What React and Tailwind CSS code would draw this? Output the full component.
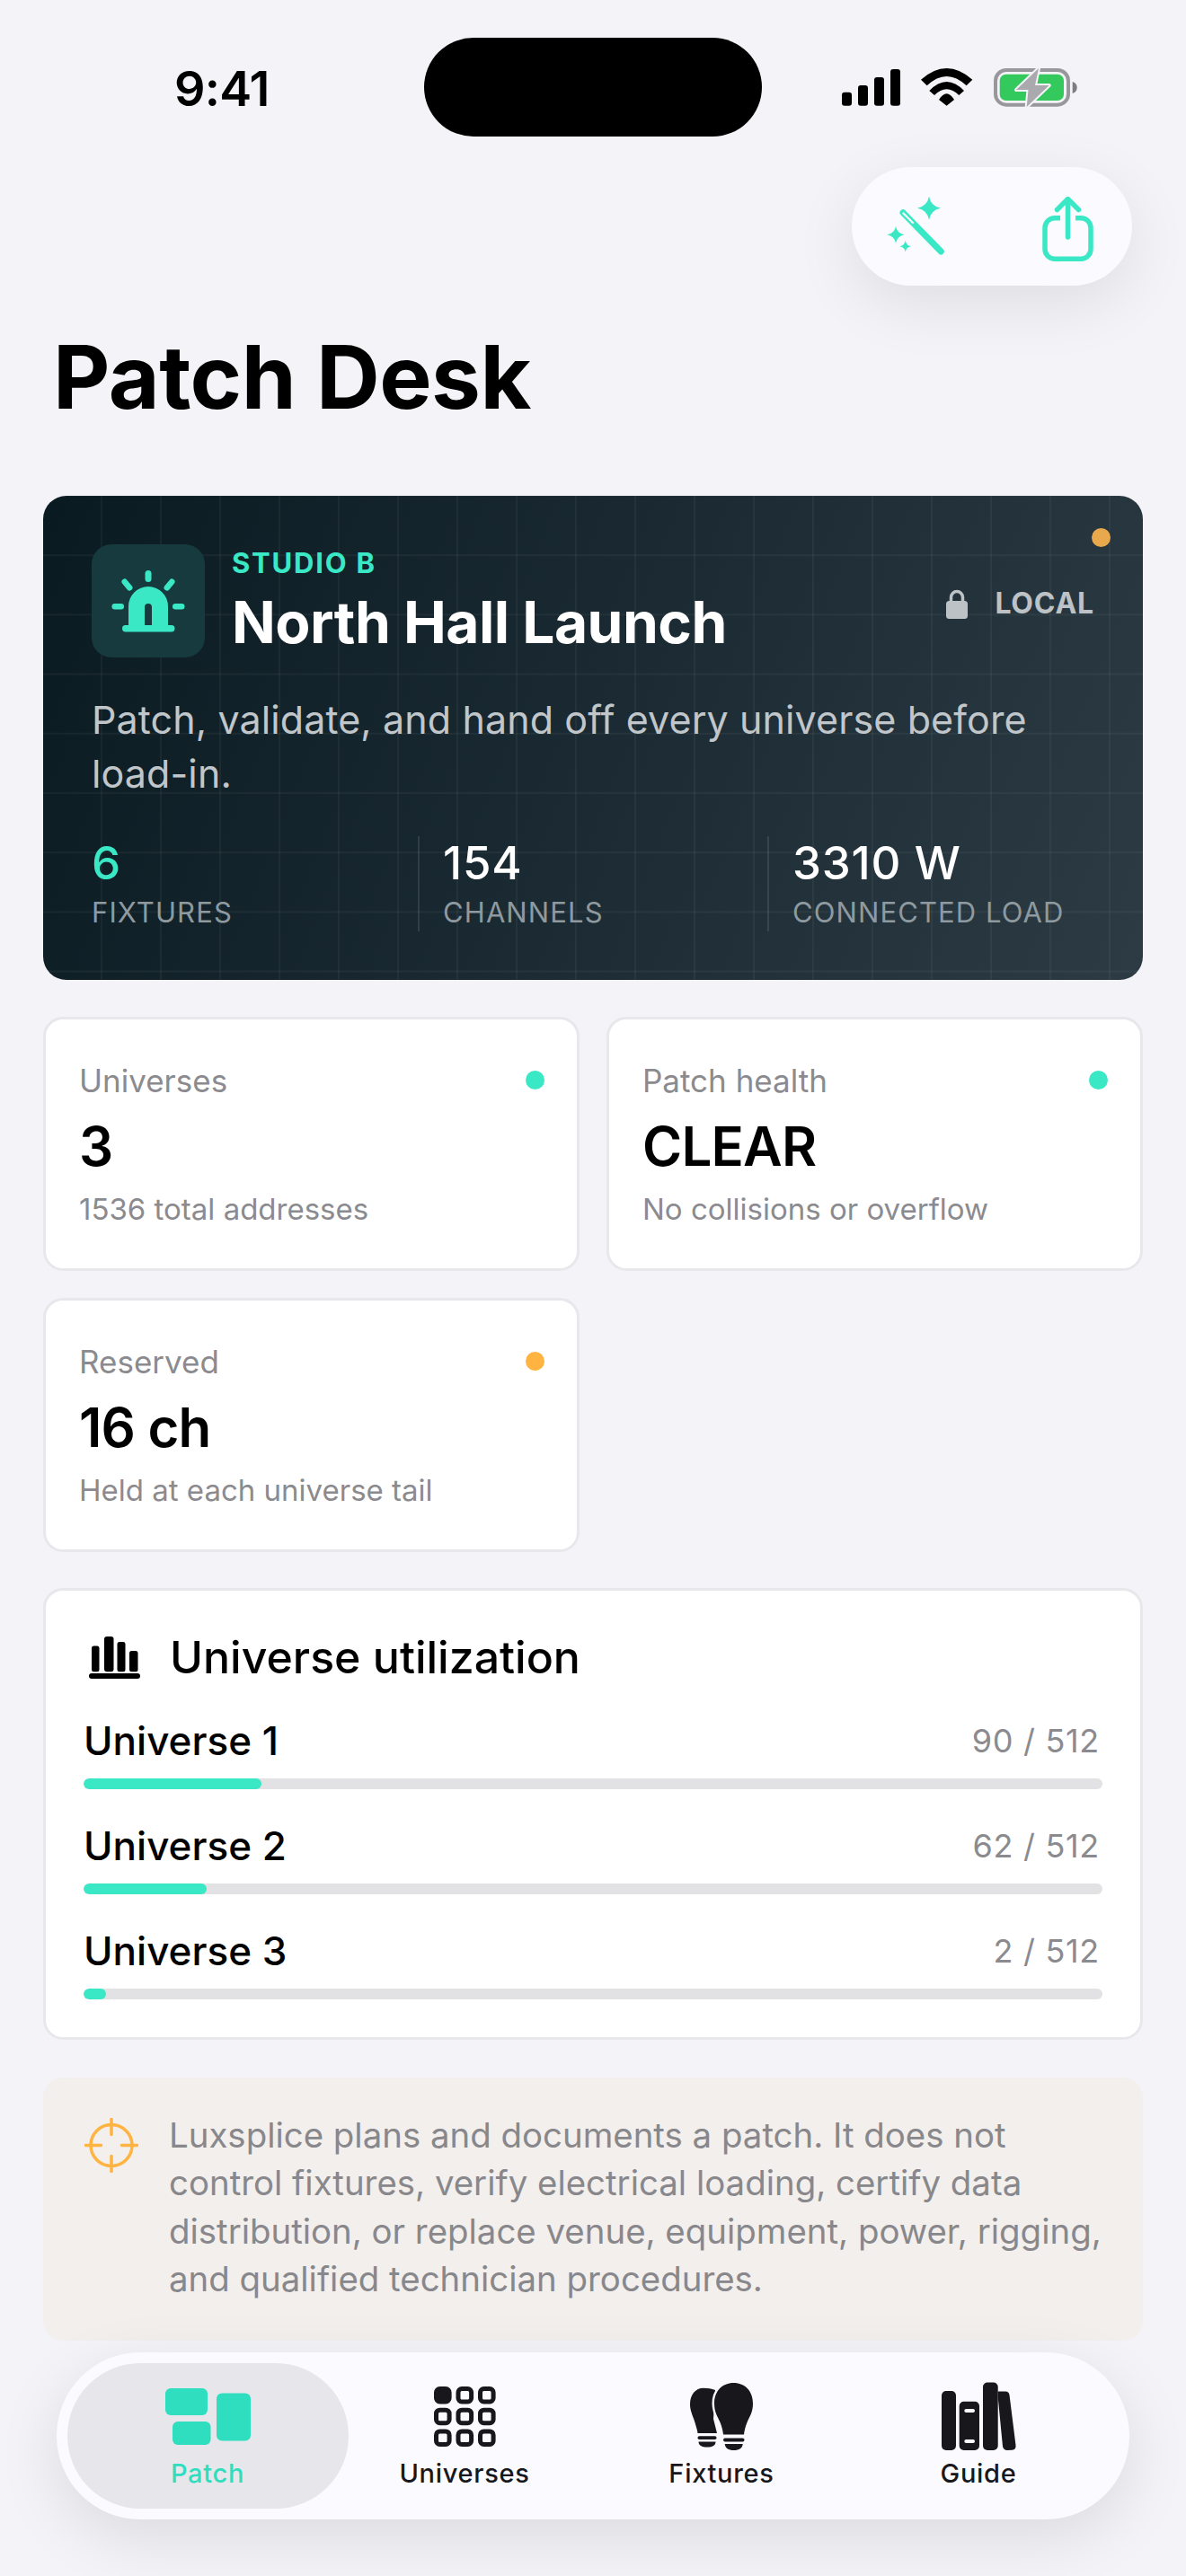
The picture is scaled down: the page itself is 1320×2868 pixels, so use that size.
const mint = '#3ae8c6';
const tabInk = '#18181c';
const navBg = '#fbfbff';

const SignalIcon = () => (
    <svg width="65" height="41" viewBox="0 0 65 41" fill="#000">
        <rect x="0" y="25.700" width="11" height="15" rx="3" />
        <rect x="18" y="18" width="11" height="22.700" rx="3" />
        <rect x="36" y="9" width="11" height="31.700" rx="3" />
        <rect x="54" y="0" width="11" height="40.700" rx="3" />
    </svg>
);

const WifiIcon = () => (
    <svg width="58" height="42" viewBox="0 0 58 42" fill="#000">
        <path d="M0 12.700Q28.600 -12.700 57.300 12.700L50.600 19.300Q28.600 -1.300 6.700 19.300Z" />
        <path d="M9.300 25Q28.600 5 48 25L42.300 30Q28.600 16.600 15 30Z" />
        <path d="M20 35Q28.600 21.600 37 35L28.600 41.700Z" />
    </svg>
);

const BatteryIcon = () => (
    <svg width="93" height="45" viewBox="0 0 93 45">
        <rect x="2" y="3" width="81" height="38.700" rx="12" fill="none" stroke="#98989c" strokeWidth="4" />
        <rect x="6.700" y="7.700" width="71.300" height="29.300" rx="7" fill="#34c95c" />
        <path d="M87.700 16c3.500 1 5 3.500 5 6.500s-1.500 5.500-5 6.500z" fill="#7d7d80" />
        <path d="M50 1L25 25h13.500L36.700 44 61.700 20H46z" fill="#aaaaae" stroke="#f3f3f8" strokeWidth="4" paintOrder="stroke" strokeLinejoin="round" />
    </svg>
);

const Sparkle = ({ x, y, r }) => {
    const k = r * 0.16;
    return <path d={`M${x} ${y - r}Q${x + k} ${y - k} ${x + r} ${y}Q${x + k} ${y + k} ${x} ${y + r}Q${x - k} ${y + k} ${x - r} ${y}Q${x - k} ${y - k} ${x} ${y - r}Z`} />;
};

const WandIcon = () => (
    <svg width="68" height="68" viewBox="0 0 68 68" fill={mint}>
        <Sparkle x={49} y={13.700} r={13} />
        <Sparkle x={12} y={43.300} r={9.500} />
        <Sparkle x={22.700} y={56.300} r={6.200} />
        <path d="M20 18.700L62.300 62" stroke={mint} strokeWidth="7" strokeLinecap="round" />
        <path d="M20.500 19.500L31 30" stroke={navBg} strokeWidth="2.200" strokeLinecap="round" />
    </svg>
);

const ShareIcon = () => (
    <svg width="57" height="72" viewBox="0 0 57 72" fill="none" stroke={mint} strokeWidth="5.500" strokeLinecap="round" strokeLinejoin="round">
        <path d="M28.500 45V3M16.500 14.500L28.500 2.500l12 12" />
        <path d="M20 23.700H14a11 11 0 0 0-11 11V58.300a11 11 0 0 0 11 11H43a11 11 0 0 0 11-11V34.700a11 11 0 0 0-11-11H37" strokeLinecap="butt" />
    </svg>
);

const BeaconIcon = () => (
    <svg width="82" height="69" viewBox="0 0 82 69" fill={mint}>
        <rect x="37.500" y="0" width="7" height="13" rx="3.500" />
        <rect x="14.200" y="8.500" width="6.500" height="15" rx="3.200" transform="rotate(-40 17.500 16)" />
        <rect x="61.300" y="8.500" width="6.500" height="15" rx="3.200" transform="rotate(40 64.500 16)" />
        <rect x="0.500" y="37" width="13.500" height="6.500" rx="3.200" />
        <rect x="68" y="37" width="13.500" height="6.500" rx="3.200" />
        <rect x="12" y="61" width="58.500" height="7.500" rx="3.700" />
        <path fillRule="evenodd" d="M19 62V40a22 22 0 0 1 44 0v22zM37 62h8V41a4 4 0 0 0-8 0z" />
    </svg>
);

const LockIcon = () => (
    <svg width="24" height="33" viewBox="0 0 24 33" fill="#bcc2c5">
        <path d="M5.500 15V9a6.500 6.500 0 0 1 13 0v6" fill="none" stroke="#bcc2c5" strokeWidth="3.500" />
        <rect x="0" y="13" width="24" height="20" rx="3.500" />
    </svg>
);

const ChartIcon = () => (
    <svg width="57" height="47" viewBox="0 0 57 47" fill="#000">
        <rect x="3" y="10.500" width="8.500" height="28.800" rx="2.500" />
        <rect x="17" y="0" width="10.500" height="39.300" rx="3" />
        <rect x="31.500" y="6" width="9" height="33.300" rx="2.500" />
        <rect x="45" y="16" width="9.500" height="23.300" rx="2.500" />
        <rect x="0" y="41" width="57" height="6" rx="3" />
    </svg>
);

const TargetIcon = () => (
    <svg width="60" height="61" viewBox="0 0 60 61" fill="none" stroke="#ffb340" strokeWidth="3.500" strokeLinecap="round">
        <circle cx="30" cy="30.500" r="23" />
        <path d="M30 1.500v17M30 42.500v17M1.500 30.500h17M41.500 30.500h17" />
    </svg>
);

const PatchIcon = () => (
    <svg width="95" height="63" viewBox="0 0 95 63" fill="#2fddbf">
        <rect x="0" y="0" width="47" height="30" rx="6" />
        <rect x="57" y="5.500" width="38" height="53" rx="6" />
        <rect x="8" y="37" width="42.500" height="26" rx="6" />
    </svg>
);

const GridIcon = () => {
    const cells = [];
    for (let r = 0; r < 3; r++) {
        for (let c = 0; c < 3; c++) {
            const first = r === 0 && c === 0;
            cells.push(
                <rect
                    key={`${r}-${c}`}
                    x={2.500 + c * 24.500}
                    y={2.500 + r * 23.700}
                    width="14.600"
                    height="14.500"
                    rx="4"
                    fill={first ? tabInk : 'none'}
                    stroke={tabInk}
                    strokeWidth="5"
                />
            );
        }
    }
    return (
        <svg width="69" height="67" viewBox="0 0 69 67">
            {cells}
        </svg>
    );
};

const BulbsIcon = () => (
    <svg width="70" height="75" viewBox="0 0 70 75" fill={tabInk}>
        <path d="M15 5.700C6 5.700 0 13 0 24c0 8 4 14 6 22 1.200 4 2.300 7.500 2.500 10H30L26 40 28 8C24 6.500 20 5.700 15 5.700z" />
        <rect x="8.500" y="59.300" width="21" height="3.700" rx="1.800" />
        <path d="M9.500 65.500h19c0 4-3.500 6-9.500 6s-9.500-2-9.500-6z" />
        <path d="M48.500 0C36 0 27 9 27 23c0 10 4 15 6.500 21 2 5 3 9 3.500 13.500H60c.5-4.500 1.500-8.500 3.500-13.500C66 38 70 33 70 23 70 9 61 0 48.500 0z" stroke={navBg} strokeWidth="5" paintOrder="stroke" />
        <rect x="37" y="61.500" width="23.500" height="4" rx="2" />
        <path d="M38.700 68h20c-.3 4.500-4 7-10 7s-9.700-2.500-10-7z" />
    </svg>
);

const BooksIcon = () => (
    <svg width="83" height="76" viewBox="0 0 83 76" fill={tabInk}>
        <rect x="0" y="10" width="16" height="66" rx="5" />
        <path fillRule="evenodd" d="M19.700 26.700a5 5 0 0 1 5-5H37a5 5 0 0 1 5 5V71a5 5 0 0 1-5 5H24.700a5 5 0 0 1-5-5zM27.300 30a2 2 0 0 0 0 4h7.700a2 2 0 0 0 0-4zM27.300 64a2 2 0 0 0 0 4h7.700a2 2 0 0 0 0-4z" />
        <rect x="46" y="0.500" width="16.700" height="75.500" rx="5" />
        <path d="M62.700 17V10.600h8.300c2.500 0 4.200 1.400 4.500 4L82.500 70.500c.4 3-1 5-4 5.300l-5.500.2c-2.800 0-4.500-1.500-5-4.200z" />
    </svg>
);

const StatCard = ({ label, value, note, dot }) => (
    <div className="relative h-[283px] rounded-[22px] border-[3px] border-[#e7e7ec] bg-white pl-[37px] pt-[48px]">
        <div className="text-[35px] leading-[40px] text-[#8b8b8f]">{label}</div>
        <div className="mt-[17px] text-[60px] leading-[72px] font-semibold tracking-[-0.8px] text-black">{value}</div>
        <div className="mt-[14px] text-[33px] leading-[40px] text-[#8b8b8f]">{note}</div>
        <span className={`absolute right-[36px] top-[57px] h-[21px] w-[21px] rounded-full ${dot}`} />
    </div>
);

const HeroStat = ({ value, label, accent, className }) => (
    <div className={className}>
        <div className={`text-[51px] leading-[60px] font-medium tracking-[0.8px] ${accent ? 'text-[#3ae8c6]' : 'text-white'}`}>{value}</div>
        <div className="mt-[6px] text-[31px] leading-[38px] tracking-[1.1px] text-[#8e9a9f]">{label}</div>
    </div>
);

const UniverseRow = ({ name, used, pct }) => (
    <div>
        <div className="flex h-[60px] items-center justify-between">
            <span className="text-[44px] font-medium text-black">{name}</span>
            <span className="pr-[3px] text-[36px] tracking-[0.7px] text-[#8b8b8f]">{used} / 512</span>
        </div>
        <div className="mt-[12px] h-[12px] overflow-hidden rounded-[6px] bg-[#e2e2e4]">
            <div className="h-full rounded-[6px] bg-[#3ae8c6]" style={{ width: `${pct}%` }} />
        </div>
    </div>
);

const TabItem = ({ icon, label, active }) => (
    <div className={`flex h-[162px] flex-col items-center pt-[21px] ${active ? '-mx-[13.5px] w-[313px] rounded-[81px] bg-[#e7e7eb]' : 'w-[286px]'}`}>
        <div className="flex h-[76px] items-center">{icon}</div>
        <div className={`mt-[8px] text-[29px] leading-[36px] font-medium tracking-[0.7px] ${active ? 'text-[#2fddbf]' : 'text-[#18181c]'}`}>{label}</div>
    </div>
);

export default function App() {
    const heroBg = {
        backgroundImage:
            'linear-gradient(rgba(255,255,255,0.045) 2px, transparent 2px), linear-gradient(90deg, rgba(255,255,255,0.045) 2px, transparent 2px), linear-gradient(112deg, #0a1a21 0%, #2c3b44 100%)',
        backgroundSize: '66px 66.200px, 66px 66.200px, 100% 100%',
        backgroundPosition: '0 -1px, -2px 0, 0 0',
    };

    return (
        <div className="relative h-[2868px] w-[1320px] overflow-hidden bg-[#f3f3f8] font-['Inter','Liberation_Sans',sans-serif]">
            {/* Status bar */}
            <div className="flex h-[110px] translate-y-[42px] items-center pl-[194px]">
                <div className="mt-[3px] w-[278px] text-[54px] leading-[60px] font-semibold tracking-[-0.8px] text-black">9:41</div>
                <div className="h-[110px] w-[376px] rounded-[55px] bg-black" />
                <div className="ml-[89px] flex items-center gap-[23px]">
                    <SignalIcon />
                    <WifiIcon />
                    <BatteryIcon />
                </div>
            </div>

            {/* Floating actions */}
            <div className="absolute left-[948px] top-[186px] flex h-[132px] w-[312px] items-center justify-between rounded-[66px] bg-[#fbfbff] pl-[37px] pr-[43px] shadow-[0_20px_70px_rgba(0,0,0,0.09)]">
                <WandIcon />
                <div className="mt-[5px]"><ShareIcon /></div>
            </div>

            <main className="px-[48px]">
                <h1 className="ml-[11px] mt-[255px] text-[98px] leading-[110px] font-bold tracking-[-0.5px] text-black">Patch Desk</h1>

                {/* Hero */}
                <section className="relative mt-[77px] h-[539px] overflow-hidden rounded-[26px] px-[54px] pt-[54px]" style={heroBg}>
                    <div className="flex">
                        <div className="flex h-[126px] w-[126px] items-center justify-center rounded-[22px] bg-[#163a3d]">
                            <BeaconIcon />
                        </div>
                        <div className="ml-[30px] flex-1 self-center">
                            <div className="text-[31px] leading-[38px] font-bold tracking-[1.8px] text-[#3ae8c6]">STUDIO B</div>
                            <div className="mt-[9px] text-[64px] leading-[76px] font-bold tracking-[-0.5px] text-white">North Hall Launch</div>
                        </div>
                        <div className="mt-[42px] flex items-center gap-[30px] self-start text-[#bcc2c5]">
                            <LockIcon />
                            <span className="text-[32px] font-bold tracking-[0.8px]">LOCAL</span>
                        </div>
                    </div>
                    <p className="mt-[39px] text-[43px] leading-[60px] tracking-[0.1px] text-[#c0c6c9]">Patch, validate, and hand off every universe before load-in.</p>
                    <div className="mt-[40px] flex">
                        <HeroStat value="6" label="FIXTURES" accent className="w-[363px]" />
                        <HeroStat value="154" label="CHANNELS" className="h-[106px] w-[389px] border-l-2 border-white/10 pl-[26px]" />
                        <HeroStat value="3310 W" label="CONNECTED LOAD" className="h-[106px] flex-1 border-l-2 border-white/10 pl-[26px]" />
                    </div>
                    <span className="absolute right-[36px] top-[36px] h-[21px] w-[21px] rounded-full bg-[#e8a94d]" />
                </section>

                {/* Stat cards */}
                <div className="mt-[41px] grid grid-cols-2 gap-[30px]">
                    <StatCard label="Universes" value="3" note="1536 total addresses" dot="bg-[#3ae8c6]" />
                    <StatCard label="Patch health" value="CLEAR" note="No collisions or overflow" dot="bg-[#3ae8c6]" />
                    <StatCard label="Reserved" value="16 ch" note="Held at each universe tail" dot="bg-[#ffb340]" />
                </div>

                {/* Utilization */}
                <section className="mt-[40px] h-[503px] rounded-[22px] border-[3px] border-[#e7e7ec] bg-white px-[42px] pt-[39px]">
                    <div className="flex items-center gap-[33px] pl-[6px]">
                        <ChartIcon />
                        <h2 className="text-[50px] leading-[70px] font-medium text-black">Universe utilization</h2>
                    </div>
                    <div className="mt-[28px] flex flex-col gap-[33px]">
                        <UniverseRow name="Universe 1" used="90" pct={17.500} />
                        <UniverseRow name="Universe 2" used="62" pct={12.100} />
                        <UniverseRow name="Universe 3" used="2" pct={2.200} />
                    </div>
                </section>

                {/* Disclaimer */}
                <section className="mt-[42px] flex h-[293px] rounded-[22px] bg-[#f3efec] pl-[46px] pr-[40px] pt-[38px]">
                    <div className="flex-none pt-[7px]"><TargetIcon /></div>
                    <p className="ml-[34px] text-[38.4px] leading-[53.3px] text-[#88888c]">
                        Luxsplice plans and documents a patch. It does not control fixtures, verify electrical loading, certify data distribution, or replace venue, equipment, power, rigging, and qualified technician procedures.
                    </p>
                </section>
            </main>

            {/* Tab bar */}
            <nav className="absolute left-[63px] top-[2619px] flex h-[186px] w-[1194px] items-center rounded-[93px] bg-[#fbfbff] px-[25px] shadow-[0_20px_70px_rgba(0,0,0,0.1)]">
                <TabItem icon={<PatchIcon />} label="Patch" active />
                <TabItem icon={<GridIcon />} label="Universes" />
                <TabItem icon={<BulbsIcon />} label="Fixtures" />
                <TabItem icon={<BooksIcon />} label="Guide" />
            </nav>
        </div>
    );
}
